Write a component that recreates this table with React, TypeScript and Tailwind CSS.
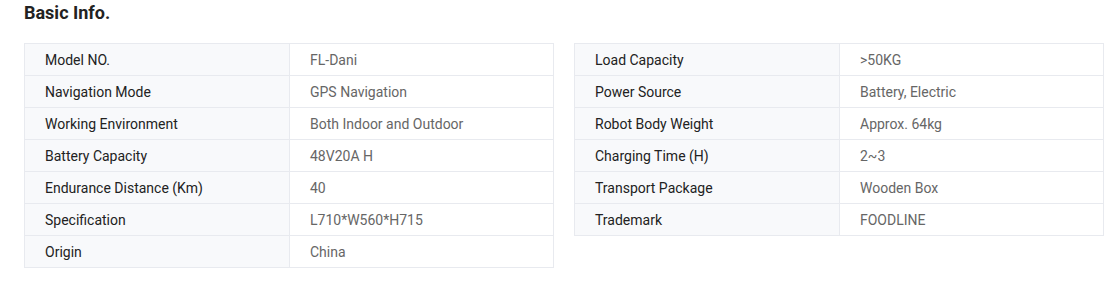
const left = [
  ["Model NO.", "FL-Dani"],
  ["Navigation Mode", "GPS Navigation"],
  ["Working Environment", "Both Indoor and Outdoor"],
  ["Battery Capacity", "48V20A H"],
  ["Endurance Distance (Km)", "40"],
  ["Specification", "L710*W560*H715"],
  ["Origin", "China"],
];

const right = [
  ["Load Capacity", ">50KG"],
  ["Power Source", "Battery, Electric"],
  ["Robot Body Weight", "Approx. 64kg"],
  ["Charging Time (H)", "2~3"],
  ["Transport Package", "Wooden Box"],
  ["Trademark", "FOODLINE"],
];

const InfoTable = ({ rows }: { rows: string[][] }) => (
  <table className="w-[530px] shrink-0 border-collapse table-fixed text-[14px]">
    <tbody>
      {rows.map(([k, v]) => (
        <tr key={k} className="h-[32px]">
          <td className="w-[265px] border border-[#e8eaef] bg-[#f8f9fb] pl-[20px] pt-[1px] text-[#222]">
            {k}
          </td>
          <td className="border border-[#e8eaef] pl-[20px] pt-[1px] text-[#666]">{v}</td>
        </tr>
      ))}
    </tbody>
  </table>
);

export default function App() {
  return (
    <div className="w-[1115px] h-[281px] bg-white pl-[24px] pt-[2px] font-['Roboto',sans-serif]">
      <h2 className="text-[18px] leading-[22px] font-bold text-[#222]">Basic Info.</h2>
      <div className="flex items-start gap-[20px] mt-[19px]">
        <InfoTable rows={left} />
        <InfoTable rows={right} />
      </div>
    </div>
  );
}
